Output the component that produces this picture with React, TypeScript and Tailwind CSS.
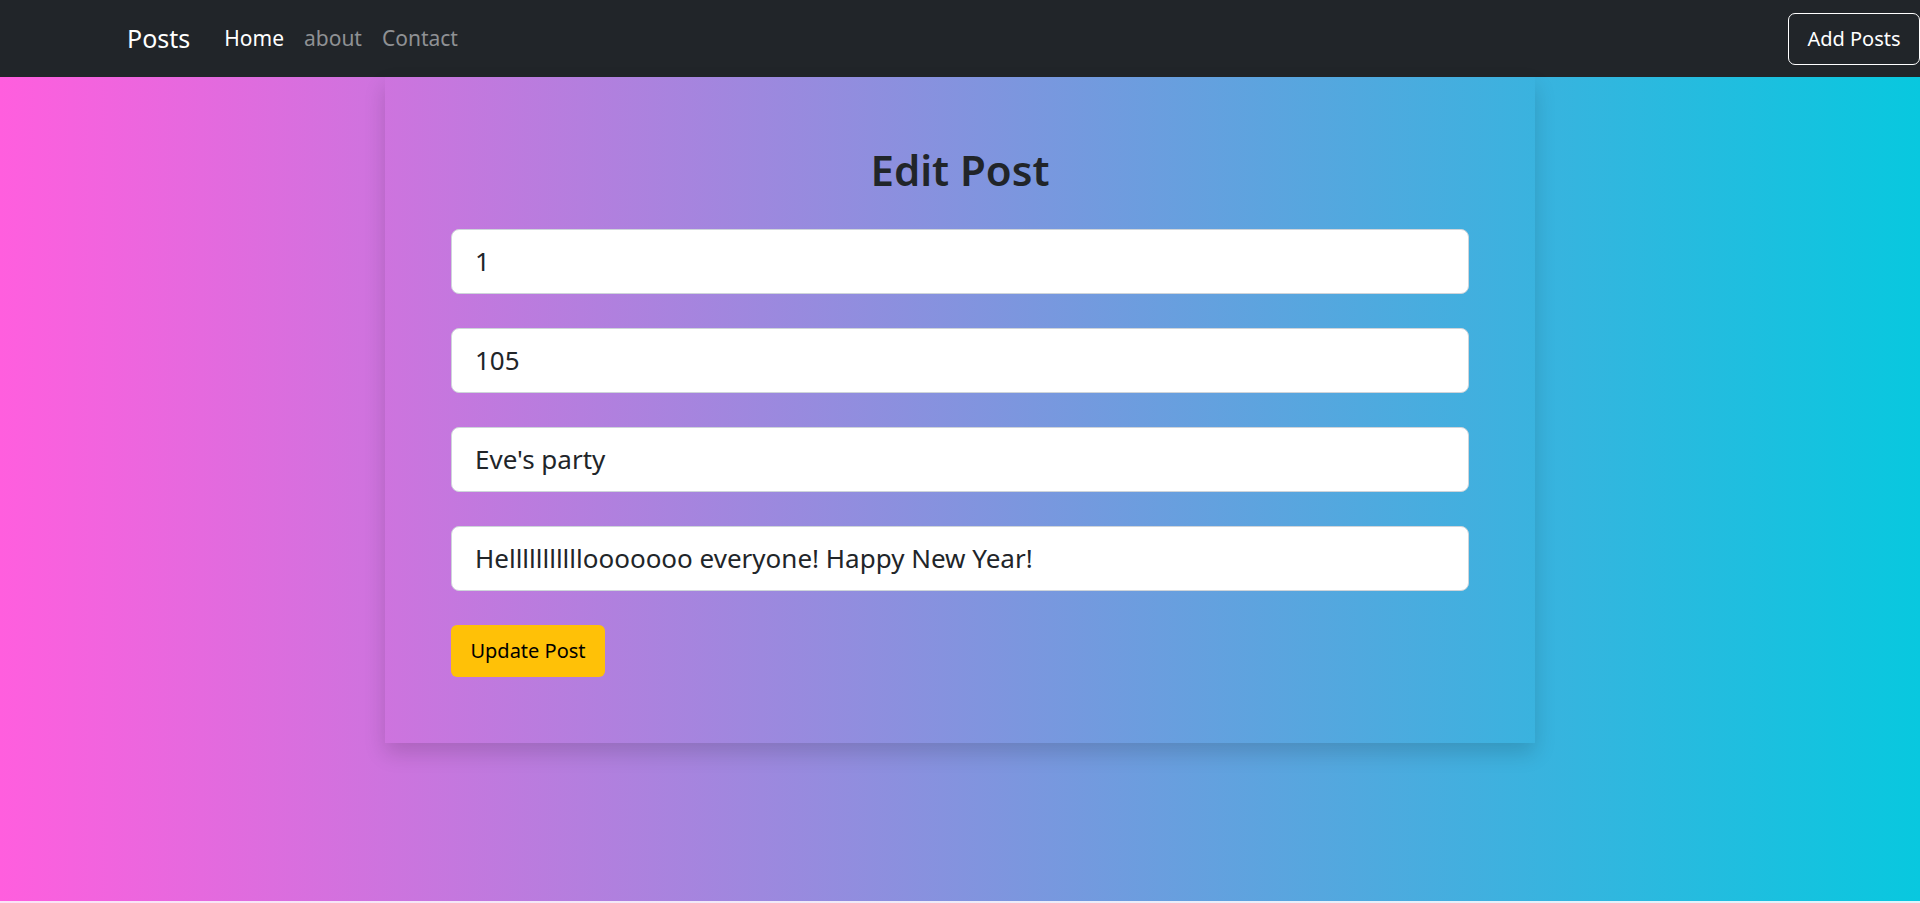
import React from "react";

const font = { fontFamily: '"Noto Sans", "Open Sans", sans-serif' };

export default function App() {
  return (
    <div className="relative w-[1920px] h-[903px] overflow-hidden bg-white" style={font}>
      <nav className="h-[77px] bg-[#212529] flex items-center pl-[127px]">
        <span className="text-[25px] text-white leading-none">Posts</span>
        <div className="flex items-center ml-[24px] text-[21px] leading-none">
          <span className="px-[10px] text-white">Home</span>
          <span className="px-[10px] text-[#8f9194]">about</span>
          <span className="px-[10px] text-[#8f9194]">Contact</span>
        </div>
        <button className="ml-auto h-[52px] w-[132px] border border-white rounded-[7px] text-white text-[20px] leading-none">
          Add Posts
        </button>
      </nav>
      <main className="h-[824px] bg-[linear-gradient(90deg,#ff5ede_0%,#08c8df_100%)] flex justify-center">
        <div className="w-[1150px] h-[666px] shadow-[0_10px_20px_rgba(0,0,0,0.15)] px-[66px] pt-[68px] pb-[66px] flex flex-col">
          <h1 className="h-[50px] flex items-center justify-center text-[42px] font-semibold text-[#212529] leading-none">
            Edit Post
          </h1>
          <div className="mt-[34px] flex flex-col gap-[34px]">
            {["1", "105", "Eve's party", "Helllllllllllooooooo everyone! Happy New Year!"].map((v) => (
              <div
                key={v}
                className="h-[65px] bg-white border border-[#ced4da] rounded-[8px] flex items-center pl-[23px] text-[26px] text-[#212529]"
              >
                {v}
              </div>
            ))}
          </div>
          <button className="mt-[34px] self-start h-[52px] w-[154px] bg-[#ffc107] rounded-[6px] text-[20px] text-black leading-none">
            Update Post
          </button>
        </div>
      </main>
      <div className="h-[2px] bg-[linear-gradient(90deg,#fbe3f6,#e0f4fb)]"></div>
    </div>
  );
}
